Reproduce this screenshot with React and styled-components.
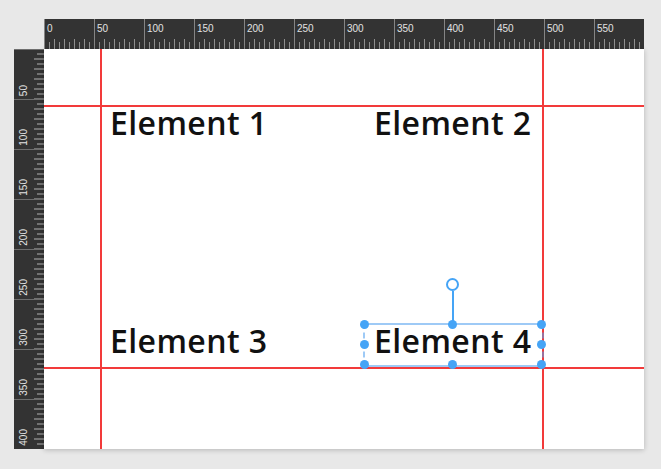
import React from "react";
import styled, { createGlobalStyle } from "styled-components";

const GlobalStyle = createGlobalStyle`
  html, body {
    margin: 0;
    padding: 0;
    background: #e8e8e8;
  }
  body {
    font-family: "Open Sans", "Liberation Sans", sans-serif;
  }
`;

const WIDTH = 600;
const HEIGHT = 400;

const topMarks = [0, 50, 100, 150, 200, 250, 300, 350, 400, 450, 500, 550];
const sideMarks = [50, 100, 150, 200, 250, 300, 350, 400];

const elements = ["Element 1", "Element 2", "Element 3", "Element 4"];
const selected = "Element 4";

const handles = [
  ["0%", "0%"],
  ["50%", "0%"],
  ["100%", "0%"],
  ["0%", "50%"],
  ["100%", "50%"],
  ["0%", "100%"],
  ["50%", "100%"],
  ["100%", "100%"],
];

const App = () => {
  return (
    <>
      <GlobalStyle />
      <Page>
        <Workspace>
          <Corner />
          <TopRuler>
            {topMarks.map((v) => (
              <TopCell key={v}>{v}</TopCell>
            ))}
          </TopRuler>
          <SideRuler>
            {sideMarks.map((v) => (
              <SideCell key={v}>
                <SideLabel>{v}</SideLabel>
              </SideCell>
            ))}
          </SideRuler>
          <Canvas>
            <ElementGrid>
              {elements.map((label) => (
                <Element key={label}>
                  {label}
                  {label === selected && (
                    <Selection>
                      <RotateStem />
                      <RotateKnob />
                      {handles.map(([x, y]) => (
                        <Handle key={x + y} $x={x} $y={y} />
                      ))}
                    </Selection>
                  )}
                </Element>
              ))}
            </ElementGrid>

            <GuideV $at={56} />
            <GuideV $at={498} />
            <GuideH $at={56} />
            <GuideH $at={318} />
          </Canvas>
        </Workspace>
      </Page>
    </>
  );
};

export default App;

const Page = styled.div`
  padding: 19px 0 0 14px;
  height: 469px;
  box-sizing: border-box;
`;

const Workspace = styled.div`
  display: grid;
  grid-template-columns: 30px ${WIDTH}px;
  grid-template-rows: 30px ${HEIGHT}px;
`;

const Corner = styled.div``;

const TopRuler = styled.div`
  display: flex;
  background-color: #333;
  background-image: repeating-linear-gradient(
      to right,
      #858585 0 1px,
      transparent 1px 50px
    ),
    repeating-linear-gradient(to right, #8f8f8f 0 1px, transparent 1px 10px),
    repeating-linear-gradient(to right, #8f8f8f 0 1px, transparent 1px 5px);
  background-size: 100% 100%, 100% 10px, 100% 7px;
  background-position: 0 0, 0 bottom, 0 bottom;
  background-repeat: no-repeat;
  overflow: hidden;
`;

const TopCell = styled.span`
  flex: 0 0 50px;
  box-sizing: border-box;
  padding: 4px 0 0 3px;
  font-family: "Liberation Sans", Arial, sans-serif;
  font-size: 10px;
  line-height: 12px;
  color: #e2e2e2;
`;

const SideRuler = styled.div`
  display: flex;
  flex-direction: column;
  background-color: #333;
  background-image: repeating-linear-gradient(
      to bottom,
      #6e6e6e 0 1px,
      transparent 1px 50px
    ),
    repeating-linear-gradient(to bottom, #727272 0 2px, transparent 2px 10px),
    repeating-linear-gradient(to bottom, #727272 0 2px, transparent 2px 5px);
  background-size: 100% 100%, 10px 100%, 7px 100%;
  background-position: 0 0, right -1px, right -1px;
  background-repeat: no-repeat;
  overflow: hidden;
`;

const SideCell = styled.div`
  flex: 0 0 50px;
  display: flex;
  flex-direction: column;
  justify-content: flex-end;
  align-items: flex-start;
  box-sizing: border-box;
  padding: 0 0 3px 5px;
`;

const SideLabel = styled.span`
  font-family: "Liberation Sans", Arial, sans-serif;
  font-size: 10px;
  line-height: 10px;
  color: #e2e2e2;
  writing-mode: vertical-rl;
  transform: rotate(180deg);
`;

const Canvas = styled.div`
  position: relative;
  background: #fff;
  box-shadow: 0 1px 5px rgba(0, 0, 0, 0.22);
  overflow: hidden;
`;

const ElementGrid = styled.div`
  display: grid;
  grid-template-columns: 178px 178px;
  grid-auto-rows: 42px;
  column-gap: 86px;
  row-gap: 176px;
  padding: 57px 0 0 56px;
`;

const Element = styled.div`
  position: relative;
  box-sizing: border-box;
  padding-left: 10px;
  font-family: "Open Sans", sans-serif;
  font-weight: 600;
  font-size: 32px;
  letter-spacing: 0.4px;
  line-height: 34px;
  color: #111;
  white-space: nowrap;
`;

const GuideV = styled.div`
  position: absolute;
  top: 0;
  bottom: 0;
  left: ${(p) => p.$at}px;
  width: 2px;
  background: #f23a3a;
`;

const GuideH = styled.div`
  position: absolute;
  left: 0;
  right: 0;
  top: ${(p) => p.$at}px;
  height: 2px;
  background: #f23a3a;
`;

const Selection = styled.div`
  position: absolute;
  inset: -1px -2px -1px -1px;
  z-index: 2;
  border-top: 2px solid rgba(80, 160, 240, 0.55);
  border-bottom: 2px solid rgba(80, 160, 240, 0.55);
  border-left: 2px dashed rgba(80, 160, 240, 0.55);
  border-right: 2px dashed rgba(80, 160, 240, 0.55);
`;

const Handle = styled.div`
  position: absolute;
  left: ${(p) => p.$x};
  top: ${(p) => p.$y};
  width: 9px;
  height: 9px;
  margin: -5.5px 0 0 -5.5px;
  border-radius: 50%;
  background: #45a4f6;
`;

const RotateStem = styled.div`
  position: absolute;
  left: 50%;
  bottom: 100%;
  width: 1.5px;
  height: 34px;
  margin-left: -1.5px;
  background: #45a4f6;
`;

const RotateKnob = styled.div`
  position: absolute;
  left: 50%;
  top: -47px;
  width: 13px;
  height: 13px;
  margin-left: -7.5px;
  box-sizing: border-box;
  border: 2px solid #45a4f6;
  border-radius: 50%;
  background: #fff;
`;
